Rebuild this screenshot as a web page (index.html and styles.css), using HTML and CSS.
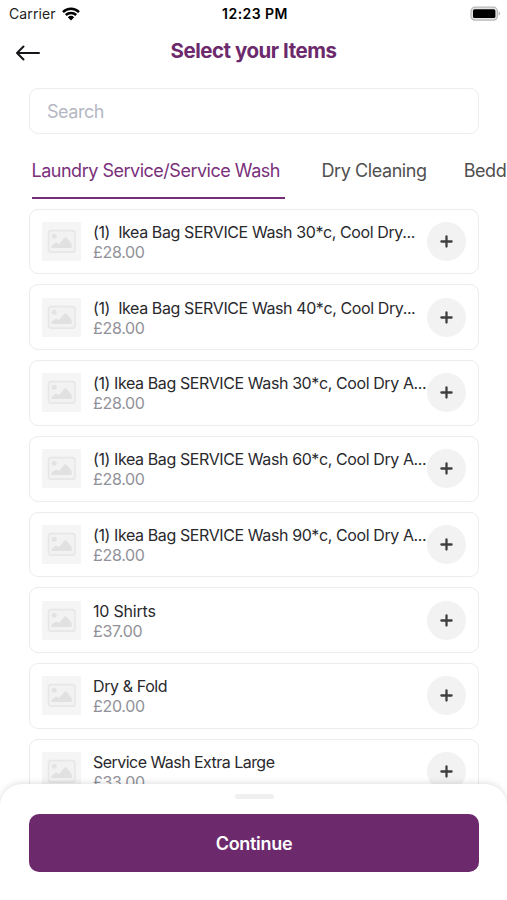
FILE: index.html
```html
<!DOCTYPE html>
<html lang="en">
<head>
<meta charset="utf-8">
<title>Select your Items</title>
<link rel="stylesheet" href="styles.css">
</head>
<body>
<svg class="defs" width="0" height="0" aria-hidden="true">
  <symbol id="photo" viewBox="0 0 39 39">
    <rect width="39" height="39" rx="1" fill="#f5f5f5"/>
    <rect x="6.5" y="8.6" width="26.4" height="21.6" rx="2.5" fill="#f2f2f2" stroke="#e7e7e7" stroke-width="1.7"/>
    <circle cx="12.2" cy="14.3" r="2.5" fill="#e3e3e3"/>
    <path d="M9.5 26v-2.2l4.4-3.4 3.2 1.5 5.6-6.3q1-.8 2 .1l5 6.2V26z" fill="#e1e1e1"/>
  </symbol>
  <symbol id="plus" viewBox="0 0 13 13">
    <path d="M6.5 1.4v10.2M1.4 6.5h10.2" fill="none" stroke="#3f3f3f" stroke-width="2.3" stroke-linecap="round"/>
  </symbol>
</svg>
<div class="app">
  <div class="status">
    <div class="carrier"><span>Carrier</span>
      <svg width="18" height="14" viewBox="0 0 18 14"><path d="M1 5.1a11.5 11.5 0 0 1 16 0M3.8 8a7.5 7.5 0 0 1 10.4 0" fill="none" stroke="#000" stroke-width="2.5"/><path d="M5.8 10.3a4.8 4.8 0 0 1 6.4 0L9 13.6z"/></svg>
    </div>
    <div class="time">12:23 PM</div>
    <svg class="battery" width="32" height="16" viewBox="0 0 32 16"><rect x="2" y="1.2" width="26.4" height="13" rx="4" fill="#e4e4e4" stroke="#b8b8b8" stroke-width="1.2"/><rect x="4" y="3.3" width="22.4" height="8.8" rx="1.6"/><path d="M29.6 5.6c2 .7 2 3.5 0 4.2z" fill="#b8b8b8"/></svg>
  </div>
  <header class="header">
    <svg class="back" width="26" height="18" viewBox="0 0 26 18"><path d="M24 9H2M8.5 2.5L2 9l6.5 6.5" fill="none" stroke="#16161a" stroke-width="2" stroke-linecap="round" stroke-linejoin="round"/></svg>
    <h1>Select your Items</h1>
  </header>
  <div class="search">Search</div>
  <nav class="tabs">
    <div class="tab active">Laundry Service/Service Wash</div>
    <div class="tab dry">Dry Cleaning</div>
    <div class="tab">Bedd</div>
  </nav>
  <main class="list">
    <div class="card"><svg class="thumb"><use href="#photo"/></svg><div class="info"><div class="name">(1)  Ikea Bag SERVICE Wash 30*c, Cool Dry...</div><div class="price">£28.00</div></div><div class="add"><svg><use href="#plus"/></svg></div></div>
    <div class="card"><svg class="thumb"><use href="#photo"/></svg><div class="info"><div class="name">(1)  Ikea Bag SERVICE Wash 40*c, Cool Dry...</div><div class="price">£28.00</div></div><div class="add"><svg><use href="#plus"/></svg></div></div>
    <div class="card"><svg class="thumb"><use href="#photo"/></svg><div class="info"><div class="name">(1) Ikea Bag SERVICE Wash 30*c, Cool Dry A...</div><div class="price">£28.00</div></div><div class="add"><svg><use href="#plus"/></svg></div></div>
    <div class="card"><svg class="thumb"><use href="#photo"/></svg><div class="info"><div class="name">(1) Ikea Bag SERVICE Wash 60*c, Cool Dry A...</div><div class="price">£28.00</div></div><div class="add"><svg><use href="#plus"/></svg></div></div>
    <div class="card"><svg class="thumb"><use href="#photo"/></svg><div class="info"><div class="name">(1) Ikea Bag SERVICE Wash 90*c, Cool Dry A...</div><div class="price">£28.00</div></div><div class="add"><svg><use href="#plus"/></svg></div></div>
    <div class="card"><svg class="thumb"><use href="#photo"/></svg><div class="info"><div class="name short">10 Shirts</div><div class="price">£37.00</div></div><div class="add"><svg><use href="#plus"/></svg></div></div>
    <div class="card"><svg class="thumb"><use href="#photo"/></svg><div class="info"><div class="name">Dry &amp; Fold</div><div class="price">£20.00</div></div><div class="add"><svg><use href="#plus"/></svg></div></div>
    <div class="card"><svg class="thumb"><use href="#photo"/></svg><div class="info"><div class="name tight">Service Wash Extra Large</div><div class="price">£33.00</div></div><div class="add"><svg><use href="#plus"/></svg></div></div>
  </main>
  <footer class="sheet">
    <div class="handle"></div>
    <div class="continue">Continue</div>
  </footer>
</div>
</body>
</html>
```
FILE: styles.css
```css
* { box-sizing: border-box; }
body { margin: 0; background: #fff; font-family: Inter, "Liberation Sans", sans-serif; }
.defs { position: absolute; }
.app { position: relative; width: 507px; height: 900px; overflow: hidden; }
.status { display: grid; grid-template-columns: 1fr auto 1fr; align-items: center; height: 27px; padding: 0 6px 0 9px; color: #000; font-size: 14px; }
.carrier { display: flex; align-items: center; gap: 6px; color: #222; letter-spacing: 0.1px; }
.time { font-weight: 600; letter-spacing: 0.45px; }
.battery { justify-self: end; }
.header { display: grid; grid-template-columns: 60px 1fr 60px; align-items: center; height: 48px; }
.back { margin: 4px 0 0 15px; }
h1 { margin: 0; color: #6c2a6c; font-size: 20.5px; font-weight: 700; letter-spacing: -0.48px; line-height: 26px; text-align: center; white-space: nowrap; }
.search { height: 46px; margin: 13px 28px 0 29px; padding: 0 17px; border: 1.5px solid #ededf0; border-radius: 9px; color: #b4b8c3; font-size: 18px; line-height: 45px; letter-spacing: -0.45px; }
.tabs { display: flex; width: 600px; height: 65px; margin-left: 31.5px; padding-top: 24px; color: #505050; font-size: 18px; letter-spacing: -0.42px; line-height: 26px; white-space: nowrap; }
.tab { height: 41px; margin-right: 37px; }
.active { width: 253px; color: #7a307b; border-bottom: 2.5px solid #752d76; letter-spacing: -0.49px; }
.list { display: flex; flex-direction: column; gap: 10px; margin: 9.6px 28px 0 29px; }
.card { display: flex; flex: none; align-items: center; height: 65.75px; padding: 0 12.5px 0 11.5px; border: 1.5px solid #ececec; border-radius: 9px; }
.thumb { flex: none; width: 39px; height: 39px; }
.info { flex: 1; min-width: 0; padding: 1px 0 0 12.5px; white-space: pre; }
.name { color: #29292d; font-size: 16px; letter-spacing: -0.4px; line-height: 20px; }
.name.short { letter-spacing: -0.2px; }
.name.tight { letter-spacing: -0.54px; }
.price { color: #919199; font-size: 16px; letter-spacing: -0.3px; line-height: 20px; }
.add { display: flex; flex: none; align-items: center; justify-content: center; width: 39px; height: 39px; border-radius: 50%; background: #f2f2f2; }
.add svg { width: 13px; height: 13px; }
.sheet { position: absolute; left: 0; right: 0; bottom: 0; height: 116px; padding: 10px 28px 0 29px; border-radius: 22px 22px 0 0; background: #fff; box-shadow: 0 -1px 6px rgba(0,0,0,.13); }
.handle { width: 39px; height: 5px; margin: 0 auto; border-radius: 3px; background: #f0f0f1; }
.continue { height: 58px; margin-top: 15px; border-radius: 10px; background: #6c2a6c; color: #fff; font-size: 18px; font-weight: 600; letter-spacing: -0.3px; line-height: 59px; text-align: center; }
```
